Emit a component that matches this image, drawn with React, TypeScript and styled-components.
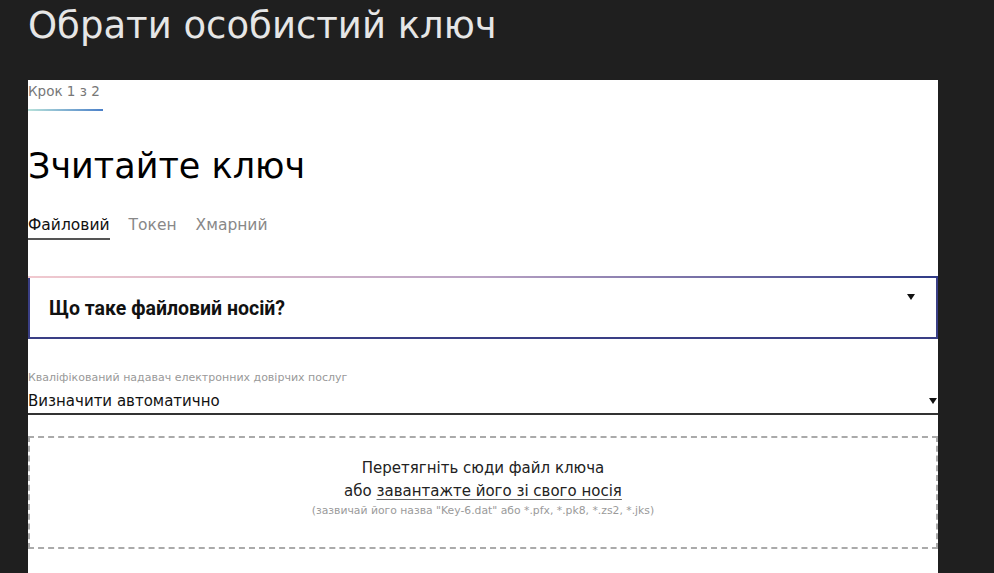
import React from "react";
import styled, { createGlobalStyle } from "styled-components";

const GlobalStyle = createGlobalStyle`
  html, body {
    margin: 0;
    padding: 0;
    background: #1f1f1f;
    font-family: "DejaVu Sans", "Noto Sans", sans-serif;
    overflow: hidden;
  }
`;

const Page = styled.div`
  height: 573px;
  padding-left: 28px;
  padding-right: 56px;
  display: flex;
  flex-direction: column;
`;

const PageTitle = styled.h1`
  margin: 0;
  height: 80px;
  padding-top: 4px;
  box-sizing: border-box;
  font-size: 37px;
  font-weight: 400;
  color: #e6e6e6;
`;

const Panel = styled.div`
  flex: 1;
  background: #fff;
  display: flex;
  flex-direction: column;
`;

const Step = styled.div`
  align-self: flex-start;
  padding-top: 3px;
  padding-right: 3px;
  font-size: 13.5px;
  color: #777;
  height: 31px;
  box-sizing: border-box;
  border-bottom: 2px solid transparent;
  border-image: linear-gradient(90deg, #b9e3da, #4a7fc9) 1;
`;

const Heading = styled.h2`
  margin: 33px 0 0;
  font-size: 35px;
  font-weight: 400;
  color: #000;
  line-height: 44px;
`;

const Tabs = styled.div`
  display: flex;
  gap: 19px;
  margin-top: 28px;
`;

const Tab = styled.div<{ $active?: boolean }>`
  font-size: 15.5px;
  padding-bottom: 4px;
  color: ${(p) => (p.$active ? "#111" : "#888")};
  border-bottom: 2px solid ${(p) => (p.$active ? "#555" : "transparent")};
`;

const Accordion = styled.div`
  margin-top: 36px;
  height: 63px;
  flex-shrink: 0;
  box-sizing: border-box;
  border: 2px solid #3a3f85;
  border-top-color: transparent;
  position: relative;
  display: flex;
  align-items: center;
  padding-left: 19px;
  padding-top: 2px;

  &::before {
    content: "";
    position: absolute;
    left: -2px;
    right: -2px;
    top: -2px;
    height: 2px;
    background: linear-gradient(90deg, #f1c9cf, #b9a2c4 50%, #2f3a86);
  }
`;

const AccordionTitle = styled.div`
  font-family: "Roboto", sans-serif;
  font-weight: 700;
  font-size: 19.5px;
  color: #111;
`;

const Caret = styled.span<{ $top?: number }>`
  position: absolute;
  right: ${(p) => (p.$top !== undefined ? 21 : 1)}px;
  top: ${(p) => p.$top ?? 14}px;
  width: 0;
  height: 0;
  border-left: 4px solid transparent;
  border-right: 4px solid transparent;
  border-top: 6px solid #111;
`;

const Field = styled.div`
  margin-top: 32px;
`;

const FieldLabel = styled.div`
  font-size: 11px;
  color: #999;
`;

const Select = styled.div`
  position: relative;
  font-size: 15px;
  color: #111;
  padding-top: 8px;
  padding-bottom: 3px;
  border-bottom: 2px solid #333;
`;

const Drop = styled.div`
  margin-top: 21px;
  height: 113px;
  flex-shrink: 0;
  box-sizing: border-box;
  border: 2px dashed #aaa;
  display: flex;
  flex-direction: column;
  align-items: center;
  justify-content: center;
  text-align: center;
  padding-bottom: 12px;
`;

const DropLine = styled.div`
  font-size: 15px;
  color: #222;
  line-height: 23px;
`;

const DropLink = styled.span`
  text-decoration: underline;
  text-underline-offset: 3px;
  text-decoration-color: #666;
`;

const DropHint = styled.div`
  font-size: 10.8px;
  color: #9a9a9a;
  margin-top: 1px;
`;

export default function App() {
  return (
    <>
      <GlobalStyle />
      <Page>
        <PageTitle>Обрати особистий ключ</PageTitle>
        <Panel>
          <Step>Крок 1 з 2</Step>
          <Heading>Зчитайте ключ</Heading>
          <Tabs>
            <Tab $active>Файловий</Tab>
            <Tab>Токен</Tab>
            <Tab>Хмарний</Tab>
          </Tabs>
          <Accordion>
            <AccordionTitle>Що таке файловий носій?</AccordionTitle>
            <Caret $top={16} />
          </Accordion>
          <Field>
            <FieldLabel>Кваліфікований надавач електронних довірчих послуг</FieldLabel>
            <Select>
              Визначити автоматично
              <Caret />
            </Select>
          </Field>
          <Drop>
            <DropLine>Перетягніть сюди файл ключа</DropLine>
            <DropLine>
              або <DropLink>завантажте його зі свого носія</DropLink>
            </DropLine>
            <DropHint>
              (зазвичай його назва "Key-6.dat" або *.pfx, *.pk8, *.zs2, *.jks)
            </DropHint>
          </Drop>
        </Panel>
      </Page>
    </>
  );
}
